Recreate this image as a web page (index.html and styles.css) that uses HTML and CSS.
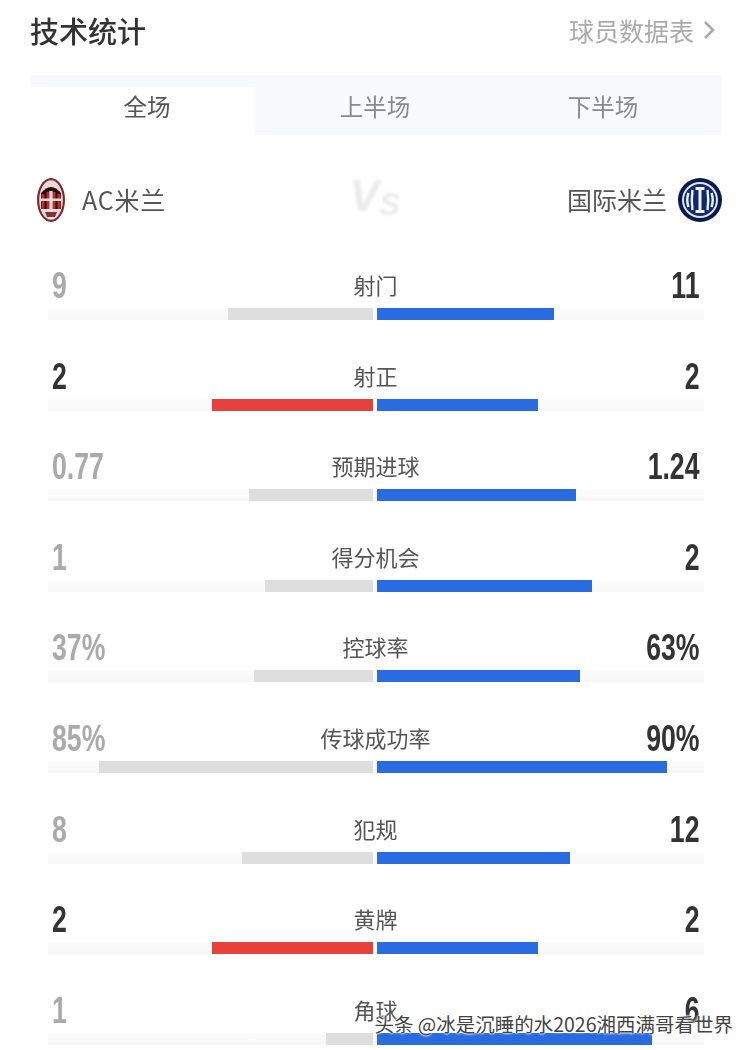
FILE: index.html
```html
<!DOCTYPE html>
<html lang="zh">
<head>
<meta charset="utf-8">
<title>技术统计</title>
<link rel="stylesheet" href="styles.css">
</head>
<body>
<div class="page">
  <div class="content">
    <header class="head">
      <h1 class="title">技术统计</h1>
      <div class="link">球员数据表
        <svg class="chev" width="12" height="20" viewBox="0 0 12 20"><path d="M2 2l8 8-8 8" fill="none" stroke="#aaa" stroke-width="2.6"/></svg>
      </div>
    </header>
    <nav class="tabs">
      <div class="tab active">全场</div>
      <div class="tab mid">上半场</div>
      <div class="tab">下半场</div>
    </nav>
    <section class="teams">
      <div class="team">
        <svg class="logo-ac" width="28" height="44" viewBox="0 0 28 44">
          <ellipse cx="14" cy="22" rx="14" ry="22" fill="#7d2b30"/>
          <ellipse cx="14" cy="22" rx="11.800" ry="19.800" fill="#ead9d9"/>
          <path d="M4 15Q14 3 24 15V31H4Z" fill="#24100f"/>
          <path d="M4.500 16h3v15h-3zM9.500 14h2.500v17H9.500zM16 14h2.500v17H16zM20.500 16h3v15h-3z" fill="#c22a30"/>
          <path d="M12.300 13h3.400v18h-3.400zM4 20.500h20v2.500H4z" fill="#f0d8d8"/>
          <path d="M8 34h12l-2 5h-8z" fill="#74383c"/>
        </svg>
        <span class="team-name ac">AC米兰</span>
      </div>
      <div class="vs"><span class="vs-v">V</span><span class="vs-s">S</span></div>
      <div class="team">
        <span class="team-name">国际米兰</span>
        <svg class="logo-inter" width="44" height="44" viewBox="0 0 44 44">
          <circle cx="22" cy="22" r="22" fill="#0a1a4a"/>
          <circle cx="22" cy="22" r="17" fill="#14296b" stroke="#dbe4f7" stroke-width="2"/>
          <path d="M17.500 9h9v3h-3V32h3v3h-9v-3h3V12h-3z" fill="#eef2fb"/>
          <path d="M10.500 15q-2.500 7 0 14M14.500 12q-1.500 10 0 20M33.500 15q2.500 7 0 14M29.500 12q1.500 10 0 20" fill="none" stroke="#eef2fb" stroke-width="2.400"/>
        </svg>
      </div>
    </section>
    <section class="stats">
      <div class="row">
        <div class="row-text"><span class="val muted">9</span><span class="label">射门</span><span class="val">11</span></div>
        <div class="track"><div class="side left"><div class="bar grey" style="width:145px"></div></div><div class="side right"><div class="bar blue" style="width:177px"></div></div></div>
      </div>
      <div class="row">
        <div class="row-text"><span class="val">2</span><span class="label">射正</span><span class="val">2</span></div>
        <div class="track"><div class="side left"><div class="bar red" style="width:161px"></div></div><div class="side right"><div class="bar blue" style="width:161px"></div></div></div>
      </div>
      <div class="row">
        <div class="row-text"><span class="val muted">0.77</span><span class="label">预期进球</span><span class="val">1.24</span></div>
        <div class="track"><div class="side left"><div class="bar grey" style="width:124px"></div></div><div class="side right"><div class="bar blue" style="width:199px"></div></div></div>
      </div>
      <div class="row">
        <div class="row-text"><span class="val muted">1</span><span class="label">得分机会</span><span class="val">2</span></div>
        <div class="track"><div class="side left"><div class="bar grey" style="width:108px"></div></div><div class="side right"><div class="bar blue" style="width:215px"></div></div></div>
      </div>
      <div class="row">
        <div class="row-text"><span class="val muted">37%</span><span class="label">控球率</span><span class="val">63%</span></div>
        <div class="track"><div class="side left"><div class="bar grey" style="width:119px"></div></div><div class="side right"><div class="bar blue" style="width:203px"></div></div></div>
      </div>
      <div class="row">
        <div class="row-text"><span class="val muted">85%</span><span class="label">传球成功率</span><span class="val">90%</span></div>
        <div class="track"><div class="side left"><div class="bar grey" style="width:274px"></div></div><div class="side right"><div class="bar blue" style="width:290px"></div></div></div>
      </div>
      <div class="row">
        <div class="row-text"><span class="val muted">8</span><span class="label">犯规</span><span class="val">12</span></div>
        <div class="track"><div class="side left"><div class="bar grey" style="width:131px"></div></div><div class="side right"><div class="bar blue" style="width:193px"></div></div></div>
      </div>
      <div class="row">
        <div class="row-text"><span class="val">2</span><span class="label">黄牌</span><span class="val">2</span></div>
        <div class="track"><div class="side left"><div class="bar red" style="width:161px"></div></div><div class="side right"><div class="bar blue" style="width:161px"></div></div></div>
      </div>
      <div class="row">
        <div class="row-text"><span class="val muted">1</span><span class="label">角球</span><span class="val">6</span></div>
        <div class="track"><div class="side left"><div class="bar grey" style="width:47px"></div></div><div class="side right"><div class="bar blue" style="width:275px"></div></div></div>
      </div>
    </section>
  </div>
  <div class="watermark">头条 @冰是沉睡的水2026湘西满哥看世界</div>
</div>
</body>
</html>
```
FILE: styles.css
```css
* { box-sizing: border-box; }
html, body { margin: 0; padding: 0; background: #fff; }
.page {
  position: relative;
  width: 750px;
  height: 1050px;
  overflow: hidden;
  font-family: "Noto Sans CJK SC", "Liberation Sans", sans-serif;
  color: #333;
}
.content { filter: blur(0.5px); }
.head {
  display: flex;
  justify-content: space-between;
  align-items: center;
  height: 60px;
  padding: 0 35px 0 30px;
}
.title { margin: 0; font-size: 29px; font-weight: 500; color: #333; }
.link { display: flex; align-items: center; gap: 9px; font-size: 25px; color: #aaa; }
.tabs {
  display: grid;
  grid-template-columns: 225px 234px 228px;
  margin: 15px 28px 0 30px;
  height: 60px;
  background: #f8f9fb;
}
.tab {
  display: flex;
  align-items: center;
  justify-content: center;
  margin-top: 12px;
  padding-bottom: 10px;
  font-size: 23.5px;
  color: #8a8a8a;
}
.tab.active { background: #fff; color: #555; padding-left: 9px; }
.tab.mid { padding-left: 6px; }
.teams {
  display: flex;
  justify-content: space-between;
  align-items: center;
  height: 44px;
  margin-top: 43px;
  padding: 0 28px 0 37px;
}
.team { display: flex; align-items: center; gap: 17px; }
.team:last-child { gap: 11px; }
.team-name { font-size: 25px; color: #555; padding-bottom: 2px; }
.team-name.ac { letter-spacing: 0.8px; }
.vs {
  display: flex;
  margin-left: 17px;
  font-family: "Liberation Sans", sans-serif;
  font-size: 44px;
  font-style: italic;
  font-weight: 700;
  line-height: 44px;
  color: #eaeaec;
  filter: blur(1.5px);
}
.vs-v { padding-bottom: 4px; }
.vs-s { padding-top: 8px; font-size: 32px; }
.stats { margin-top: 44px; padding: 0 46px 0 48px; }
.row { height: 90.6px; }
.row-text {
  display: grid;
  grid-template-columns: 1fr auto 1fr;
  align-items: center;
  height: 40px;
  padding: 0 5px 0 4px;
}
.val {
  font-family: "Liberation Sans", sans-serif;
  font-size: 36px;
  font-weight: 700;
  line-height: 40px;
  color: #333;
  transform: scaleX(0.74);
  transform-origin: left center;
}
.val:last-child { text-align: right; transform-origin: right center; }
.val.muted { color: #aaa; }
.label { padding-bottom: 4px; font-size: 22px; color: #555; }
.track {
  display: flex;
  gap: 4px;
  height: 12px;
  margin-top: 2px;
  background: linear-gradient(#fcfcfc, #f7f7f7);
}
.side { display: flex; }
.side.left { flex: 0 0 325px; justify-content: flex-end; }
.side.right { flex: 0 0 327px; }
.bar { height: 12px; }
.grey { background: #dedede; }
.red { background: #e8403a; }
.blue { background: #2b6be0; }
.watermark {
  position: absolute;
  right: 17px;
  bottom: 12px;
  font-size: 19.5px;
  line-height: 28px;
  white-space: nowrap;
  color: #444;
  text-shadow: 0 0 2px #fff, 0 0 2px #fff, 0 0 3px #fff;
}
```
